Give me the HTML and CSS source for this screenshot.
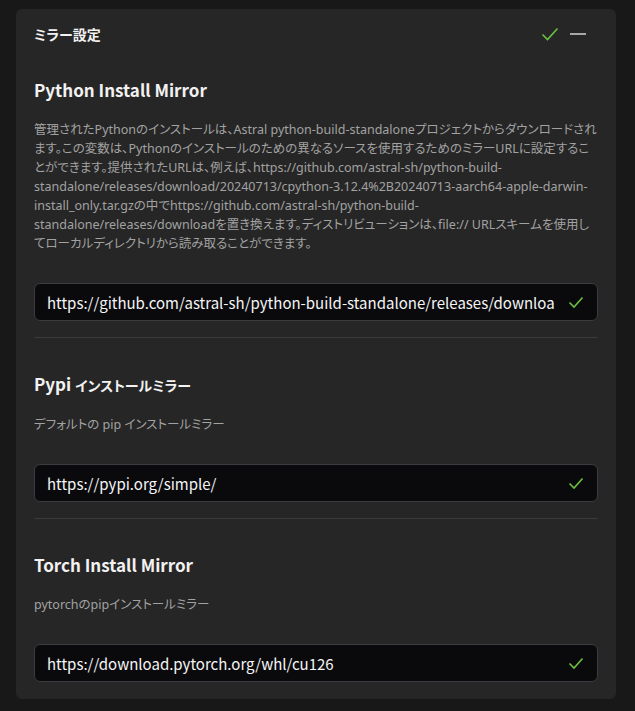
FILE: index.html
```html
<!doctype html>
<html lang="ja">
  <head>
    <meta charset="utf-8">
    <title>ミラー設定</title>
    <link rel="stylesheet" href="styles.css">
  </head>
  <body>
    <div class="panel">
      <div class="panel-head">
        <span class="panel-title">ミラー設定</span>
        <div class="panel-tools">
          <svg class="ok" width="18" height="14" viewBox="0 0 18 14"><path d="M1.5 7.5 L6.5 12.5 L16.5 1.5" fill="none" stroke="#6dbf3f" stroke-width="1.6"/></svg>
          <span class="collapse"></span>
        </div>
      </div>

      <div class="item">
        <h3>Python Install Mirror</h3>
        <p class="desc">管理されたPythonのインストールは、Astral python-build-standaloneプロジェクトからダウンロードされます。この変数は、Pythonのインストールのための異なるソースを使用するためのミラーURLに設定することができます。提供されたURLは、例えば、https://github.com/astral-sh/python-build-standalone/releases/download/20240713/cpython-3.12.4%2B20240713-aarch64-apple-darwin-install_only.tar.gzの中でhttps://github.com/astral-sh/python-build-standalone/releases/downloadを置き換えます。ディストリビューションは、file:// URLスキームを使用してローカルディレクトリから読み取ることができます。</p>
        <div class="field">
          <span class="value">https://github.com/astral-sh/python-build-standalone/releases/downloa</span>
          <svg class="ok" width="16" height="13" viewBox="0 0 16 13"><path d="M1.5 6.5 L6 11 L14.5 1.5" fill="none" stroke="#6dbf3f" stroke-width="1.6"/></svg>
        </div>
      </div>

      <div class="item">
        <h3>Pypi <span class="ja">インストールミラー</span></h3>
        <p class="desc">デフォルトの pip インストールミラー</p>
        <div class="field">
          <span class="value">https://pypi.org/simple/</span>
          <svg class="ok" width="16" height="13" viewBox="0 0 16 13"><path d="M1.5 6.5 L6 11 L14.5 1.5" fill="none" stroke="#6dbf3f" stroke-width="1.6"/></svg>
        </div>
      </div>

      <div class="item">
        <h3>Torch Install Mirror</h3>
        <p class="desc">pytorchのpipインストールミラー</p>
        <div class="field">
          <span class="value">https://download.pytorch.org/whl/cu126</span>
          <svg class="ok" width="16" height="13" viewBox="0 0 16 13"><path d="M1.5 6.5 L6 11 L14.5 1.5" fill="none" stroke="#6dbf3f" stroke-width="1.6"/></svg>
        </div>
      </div>
    </div>
  </body>
</html>
```

FILE: styles.css
```css
html, body { margin: 0; padding: 0; }
body {
  background: #181818;
  color: #f2f2f2;
  font-family: "Noto Sans CJK JP", "Noto Sans", sans-serif;
  font-feature-settings: "palt";
  padding: 9px 19px 12px 16px;
}

.panel {
  background: #262626;
  border-radius: 6px;
  padding: 0 18px 17px 18px;
}

.panel-head {
  display: flex;
  align-items: center;
  justify-content: space-between;
  height: 50px;
}
.panel-title {
  font-size: 14px;
  font-weight: 700;
}
.panel-tools {
  display: flex;
  align-items: center;
  gap: 11px;
  padding-right: 12px;
}
.collapse {
  width: 16px;
  height: 2px;
  background: #a8a8a8;
}

.item {
  border-bottom: 1px solid #3a3a3e;
  padding: 31px 0 16px;
}
.panel-head + .item { padding-top: 16px; }
.item:last-child { border-bottom: none; padding-bottom: 0; }

.item h3 {
  margin: 0;
  font-size: 17px;
  font-weight: 700;
  line-height: 30px;
}
.item h3 .ja { font-size: 14px; }

.desc {
  margin: 15px 0 30px;
  font-family: "Noto Sans", "Noto Sans CJK JP", sans-serif;
  font-size: 12.5px;
  line-height: 19px;
  color: #a2a2a2;
}

.field {
  display: flex;
  align-items: center;
  gap: 10px;
  height: 36px;
  padding: 0 13px 0 12px;
  background: #0a0a0d;
  border: 1px solid #3c3c40;
  border-radius: 6px;
}
.value {
  flex: 1;
  overflow: hidden;
  white-space: nowrap;
  font-size: 15px;
  color: #f5f5f5;
}
.ok { flex: none; }
```
